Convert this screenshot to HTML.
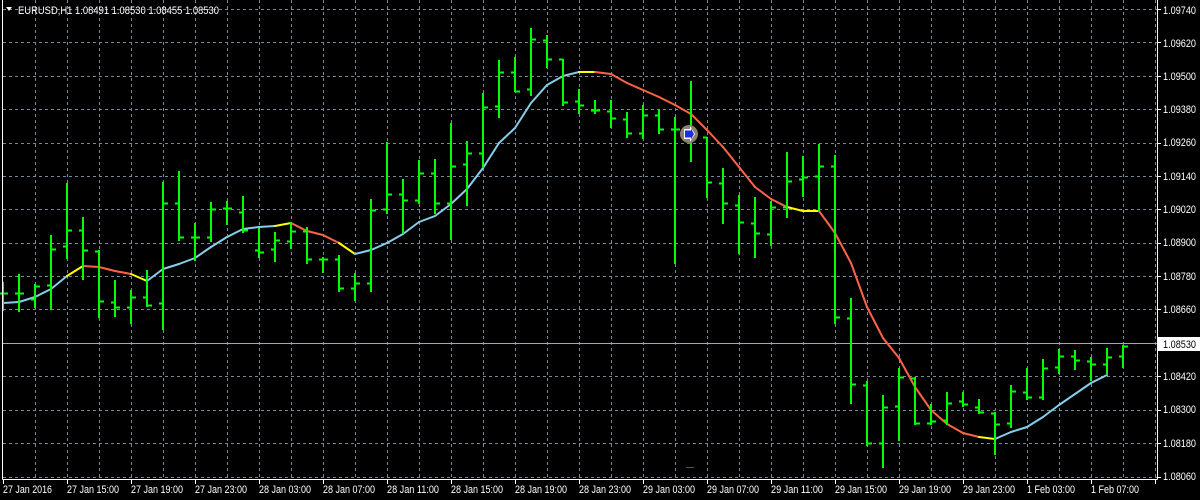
<!DOCTYPE html>
<html><head><meta charset="utf-8"><style>
html,body{margin:0;padding:0;background:#000;}
svg{display:block;}
text{font-family:"Liberation Sans",sans-serif;font-size:11px;fill:#fff;}
</style></head><body>
<svg id="c" width="1200" height="500" viewBox="0 0 1200 500" xmlns="http://www.w3.org/2000/svg">
<rect width="1200" height="500" fill="#000"/>
<g id="grid" stroke="#778899" stroke-width="1" stroke-dasharray="3,3"></g>
<line x1="3" y1="343.5" x2="1157" y2="343.5" stroke="#a0a8b4" stroke-width="1"/>
<g id="ma" fill="none" stroke-width="2"></g>
<g id="bars" stroke="#00ff00" stroke-width="2"></g>
<g stroke="#fff" stroke-width="1">
<line x1="2.5" y1="0" x2="2.5" y2="479.5"/>
<line x1="1157.5" y1="0" x2="1157.5" y2="479.5"/>
<line x1="2.5" y1="479.5" x2="1157.5" y2="479.5"/>
</g>
<g id="ticks" stroke="#fff" stroke-width="1"></g>
<circle cx="689" cy="134" r="9" fill="#8c8070"/>
<path d="M684 129 L690 129 L690 126 L695 134 L690 142 L690 139 L684 139 Z" fill="#fff"/>
<path d="M685 130.5 L691 130.5 L691 128.5 L694 134 L691 139.5 L691 137.5 L685 137.5 Z" fill="#1a2ee8"/>
<line x1="686" y1="467.5" x2="694" y2="467.5" stroke="#555" stroke-width="1"/>
<path d="M6 7 L12 7 L9 11 Z" fill="#fff"/>
<text x="18" y="14" textLength="201" lengthAdjust="spacingAndGlyphs">EURUSD,H1  1.08491 1.08530 1.08455 1.08530</text>
<g id="plabels">
<text x="1163" y="14" textLength="33" lengthAdjust="spacingAndGlyphs">1.09740</text>
<text x="1163" y="47" textLength="33" lengthAdjust="spacingAndGlyphs">1.09620</text>
<text x="1163" y="80" textLength="33" lengthAdjust="spacingAndGlyphs">1.09500</text>
<text x="1163" y="113" textLength="33" lengthAdjust="spacingAndGlyphs">1.09380</text>
<text x="1163" y="146" textLength="33" lengthAdjust="spacingAndGlyphs">1.09260</text>
<text x="1163" y="180" textLength="33" lengthAdjust="spacingAndGlyphs">1.09140</text>
<text x="1163" y="213" textLength="33" lengthAdjust="spacingAndGlyphs">1.09020</text>
<text x="1163" y="246" textLength="33" lengthAdjust="spacingAndGlyphs">1.08900</text>
<text x="1163" y="280" textLength="33" lengthAdjust="spacingAndGlyphs">1.08780</text>
<text x="1163" y="313" textLength="33" lengthAdjust="spacingAndGlyphs">1.08660</text>
<rect x="1158" y="337" width="42" height="14" fill="#fff"/>
<text x="1163" y="348" textLength="33" lengthAdjust="spacingAndGlyphs" style="fill:#000">1.08530</text>
<text x="1163" y="380" textLength="33" lengthAdjust="spacingAndGlyphs">1.08420</text>
<text x="1163" y="413" textLength="33" lengthAdjust="spacingAndGlyphs">1.08300</text>
<text x="1163" y="447" textLength="33" lengthAdjust="spacingAndGlyphs">1.08180</text>
<text x="1163" y="480" textLength="33" lengthAdjust="spacingAndGlyphs">1.08060</text>
</g>
<g>
<text x="3" y="493" textLength="49" lengthAdjust="spacingAndGlyphs">27 Jan 2016</text>
<text x="67" y="493" textLength="52" lengthAdjust="spacingAndGlyphs">27 Jan 15:00</text>
<text x="131" y="493" textLength="52" lengthAdjust="spacingAndGlyphs">27 Jan 19:00</text>
<text x="195" y="493" textLength="52" lengthAdjust="spacingAndGlyphs">27 Jan 23:00</text>
<text x="259" y="493" textLength="52" lengthAdjust="spacingAndGlyphs">28 Jan 03:00</text>
<text x="323" y="493" textLength="52" lengthAdjust="spacingAndGlyphs">28 Jan 07:00</text>
<text x="387" y="493" textLength="52" lengthAdjust="spacingAndGlyphs">28 Jan 11:00</text>
<text x="451" y="493" textLength="52" lengthAdjust="spacingAndGlyphs">28 Jan 15:00</text>
<text x="515" y="493" textLength="52" lengthAdjust="spacingAndGlyphs">28 Jan 19:00</text>
<text x="579" y="493" textLength="52" lengthAdjust="spacingAndGlyphs">28 Jan 23:00</text>
<text x="643" y="493" textLength="52" lengthAdjust="spacingAndGlyphs">29 Jan 03:00</text>
<text x="707" y="493" textLength="52" lengthAdjust="spacingAndGlyphs">29 Jan 07:00</text>
<text x="771" y="493" textLength="52" lengthAdjust="spacingAndGlyphs">29 Jan 11:00</text>
<text x="835" y="493" textLength="52" lengthAdjust="spacingAndGlyphs">29 Jan 15:00</text>
<text x="899" y="493" textLength="52" lengthAdjust="spacingAndGlyphs">29 Jan 19:00</text>
<text x="963" y="493" textLength="52" lengthAdjust="spacingAndGlyphs">29 Jan 23:00</text>
<text x="1027" y="493" textLength="48" lengthAdjust="spacingAndGlyphs">1 Feb 03:00</text>
<text x="1091" y="493" textLength="48" lengthAdjust="spacingAndGlyphs">1 Feb 07:00</text>
</g>
</svg>
<script>
(function(){
var NS="http://www.w3.org/2000/svg";
function el(p,t,a){var e=document.createElementNS(NS,t);for(var k in a)e.setAttribute(k,a[k]);p.insertBefore(e,null);return e;}
var g=document.getElementById('grid');
for(var x=35;x<1157;x+=32)el(g,'line',{x1:x+.5,y1:0,x2:x+.5,y2:479});
var ys=[9,42,76,109,143,176,209,243,276,309,343,376,410,443,477];
ys.forEach(function(y){el(g,'line',{x1:3,y1:y+.5,x2:1157,y2:y+.5});});
var t=document.getElementById('ticks');
ys.forEach(function(y){el(t,'line',{x1:1157,y1:y+.5,x2:1161,y2:y+.5});});
for(var x=3;x<1157;x+=64)el(t,'line',{x1:x+.5,y1:479,x2:x+.5,y2:484});
var B=[[282,310,293,293],[274,311,293,293],[284,307,299,286],[235,309,285,249],[183,258,246,230],[217,279,230,250],[250,317,251,301],[280,316,302,307],[290,323,307,297],[270,306,297,305],
[182,329,303,203],[171,240,203,237],[223,260,237,237],[202,241,237,209],[201,224,208,208],[196,232,212,230],[228,257,250,252],[232,261,249,240],[222,248,241,231],[227,263,231,259],
[257,272,259,259],[255,291,259,288],[273,300,288,283],[199,291,283,210],[142,213,209,194],[179,233,194,200],[160,203,200,173],[159,213,173,203],[123,239,203,166],[141,205,164,153],
[93,167,153,107],[60,117,106,72],[57,91,72,91],[28,95,89,39],[35,67,40,59],[59,105,59,102],[89,113,101,105],[100,113,110,110],[100,127,111,118],[112,137,119,133],
[105,138,133,115],[109,133,115,129],[117,263,129,129],[81,161,129,137],[137,197,137,182],[168,223,183,203],[195,253,205,222],[197,257,223,233],[201,245,234,207],[152,217,207,181],
[156,196,179,177],[144,211,176,166],[155,323,166,317],[298,403,318,384],[381,445,385,443],[395,467,443,407],[368,440,406,377],[377,424,378,423],[404,424,423,421],[392,424,420,403],
[392,406,401,404],[399,413,407,412],[412,454,413,424],[385,427,423,391],[368,399,392,397],[359,399,397,368],[349,373,367,356],[350,369,356,360],[357,380,361,364],[348,373,364,357],[345,367,356,346]];
var bg=document.getElementById('bars');
B.forEach(function(b,k){var x=3+16*k;
el(bg,'line',{x1:x,y1:b[0],x2:x,y2:b[1]+1});
el(bg,'line',{x1:x-4,y1:b[2]+.5,x2:x,y2:b[2]+.5});
el(bg,'line',{x1:x,y1:b[3]+.5,x2:x+5,y2:b[3]+.5});});
var BL="#87ceeb",YE="#ffff00",RD="#ff6347";
var M=[[3,303,BL],[19,302,BL],[35,297,BL],[51,289,BL],[67,276,BL],[83,266,YE],[99,267,RD],[115,271,RD],[131,274,RD],[147,281,YE],[163,269,BL],[179,264,BL],[195,258,BL],[211,247,BL],[227,237,BL],[243,229,BL],[259,227,BL],[275,226,BL],[291,223,YE],[307,231,RD],[323,235,RD],[339,243,RD],[355,254,YE],[371,250,BL],[387,243,BL],[403,234,BL],[419,222,BL],[435,216,BL],[451,204,BL],[467,189,BL],[483,168,BL],[499,143,BL],[515,128,BL],[531,103,BL],[547,85,BL],[563,76,BL],[579,72,BL],[595,72,YE],[611,74,RD],[627,83,RD],[643,90,RD],[659,97,RD],[675,105,RD],[691,114,RD],[707,130,RD],[723,147,RD],[739,167,RD],[755,187,RD],[771,199,RD],[787,207,RD],[803,211,YE],[819,211,YE],[835,233,RD],[851,263,RD],[867,307,RD],[883,338,RD],[899,358,RD],[915,387,RD],[931,410,RD],[947,424,RD],[963,433,RD],[979,437,RD],[995,439,YE],[1011,432,BL],[1027,427,BL],[1043,417,BL],[1059,405,BL],[1075,394,BL],[1091,383,BL],[1107,375,BL]];
var mg=document.getElementById('ma');
for(var i=1;i<M.length;i++){var a=M[i-1],b=M[i];
el(mg,'line',{x1:a[0],y1:a[1],x2:b[0],y2:b[1],stroke:b[2],'stroke-linecap':'round'});}
})();
</script>
</body></html>
